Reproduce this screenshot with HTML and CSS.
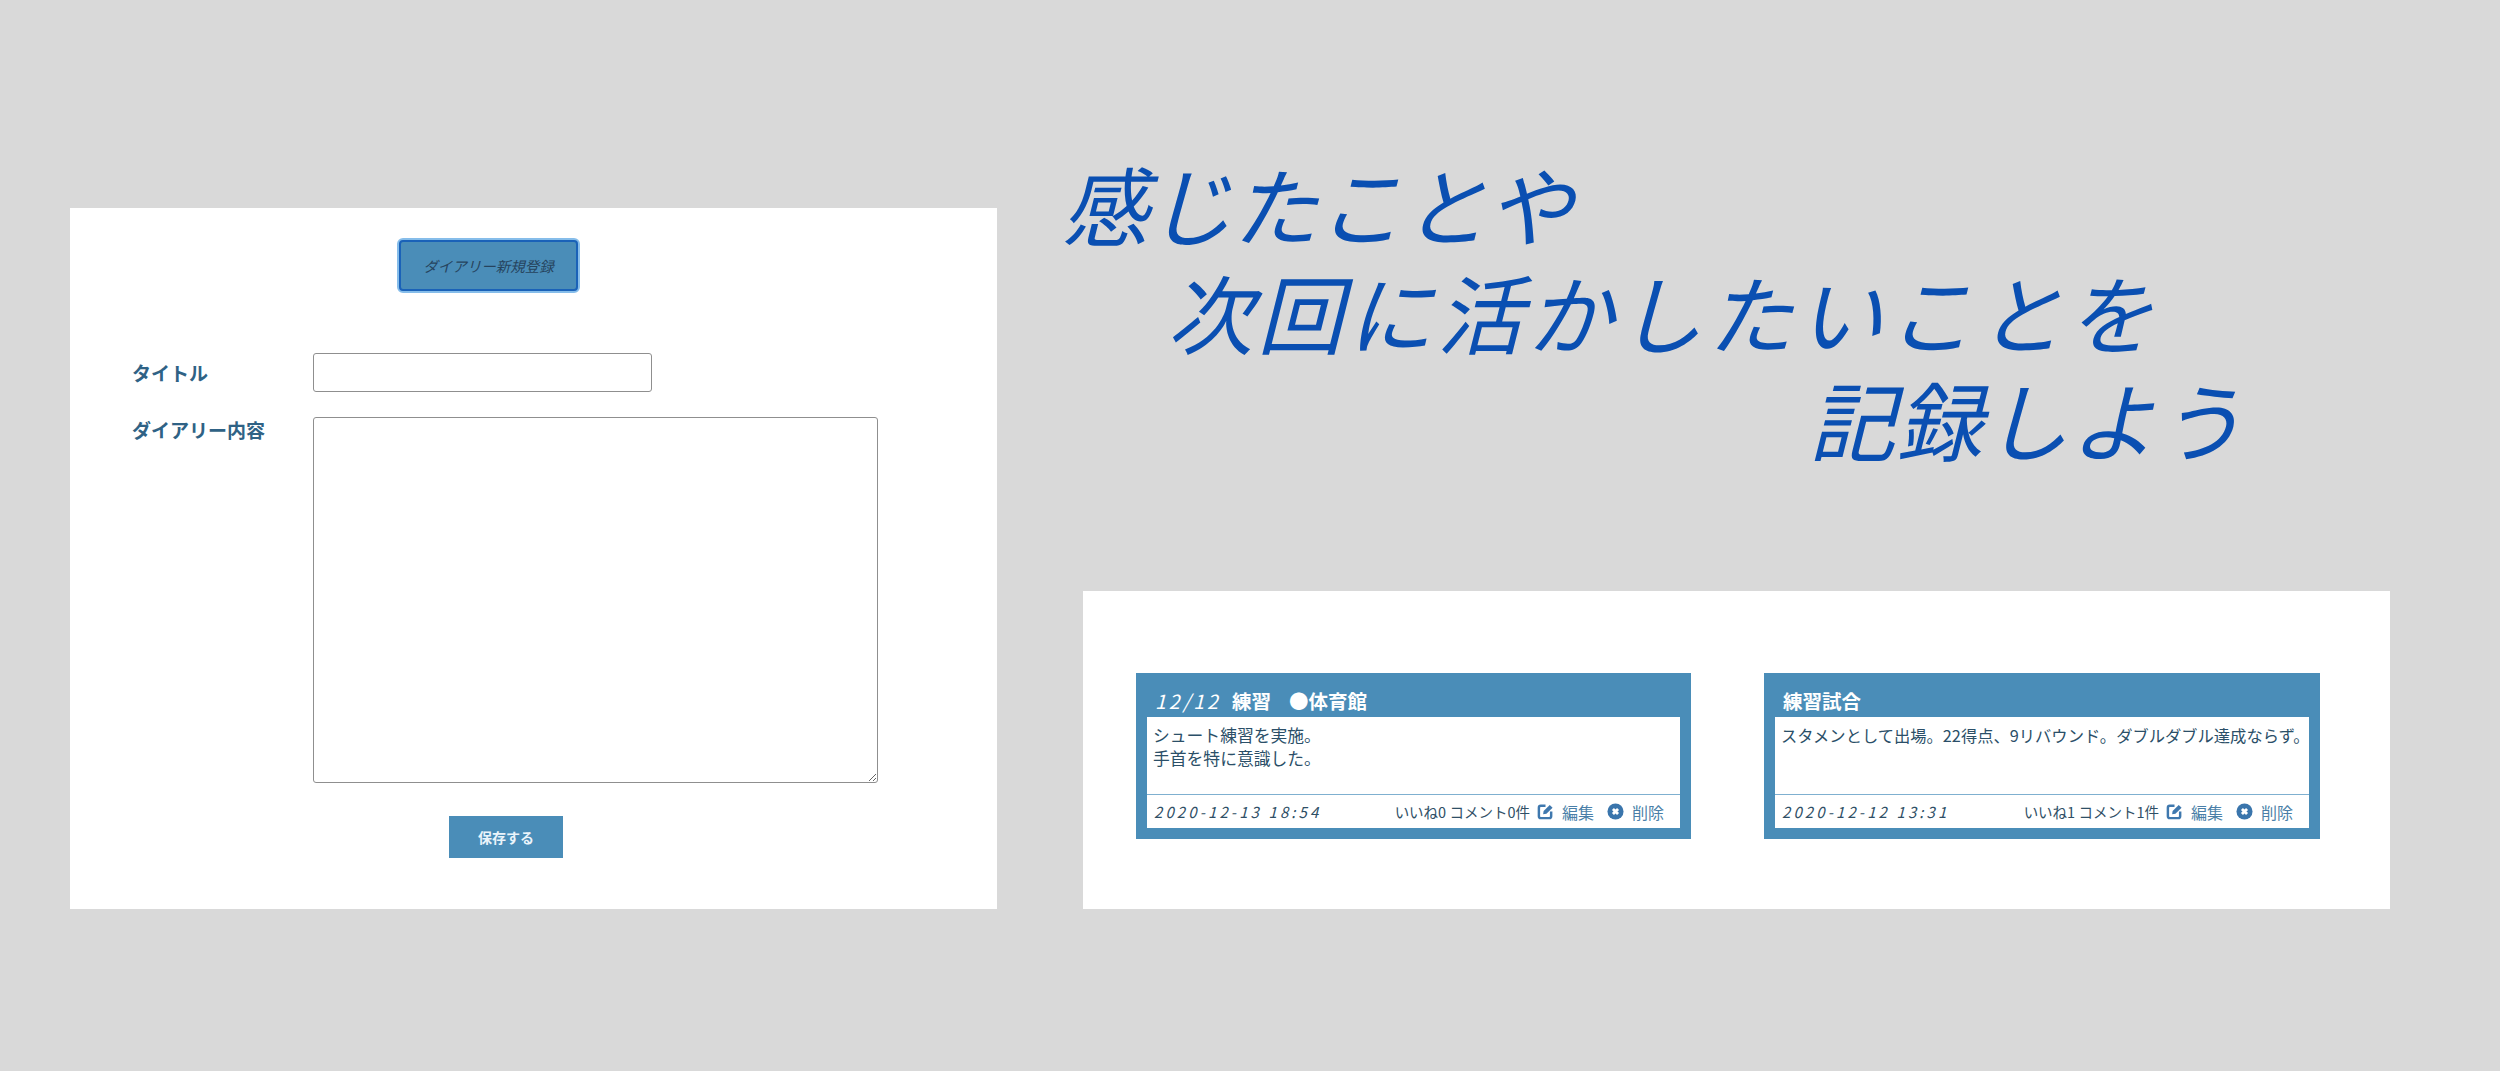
FILE: index.html
```html
<!DOCTYPE html>
<html lang="ja">
<head>
    <meta charset="UTF-8">
    <title>ダイアリー</title>
    <link rel="stylesheet" href="styles.css">
</head>
<body>

    <section class="form-panel">
        <button type="button" class="new-btn"><span class="btn-text">ダイアリー新規登録</span></button>
        <form class="diary-form">
            <label for="title" class="title-label">タイトル</label>
            <input type="text" id="title" class="title-input">
            <label for="content" class="content-label">ダイアリー内容</label>
            <textarea id="content" class="content-input"></textarea>
            <button type="button" class="save-btn">保存する</button>
        </form>
    </section>

    <div class="right-col">
        <h1 class="headline">
            <span class="line line-1">感じたことや</span>
            <span class="line line-2">次回に活かしたいことを</span>
            <span class="line line-3">記録しよう</span>
        </h1>

        <section class="list-panel">
            <article class="card">
                <h2 class="card-title"><span class="num">12/12</span><span class="kind">練習</span><span class="place">●体育館</span></h2>
                <div class="card-inner">
                    <p class="card-body">シュート練習を実施。<br>手首を特に意識した。</p>
                    <div class="card-foot">
                        <span class="date">2020-12-13 18:54</span>
                        <span class="counts">いいね0 コメント0件</span>
                        <a class="action">
                            <svg class="icon" viewBox="0 0 18 18"><path d="M9 3H4A2 2 0 0 0 2 5V14A2 2 0 0 0 4 16H13A2 2 0 0 0 15 14V9" fill="none" stroke="#3f78ae" stroke-width="2.600"/><path d="M7 8.500L13.500 2L16.500 5L10 11.500L6.500 12Z" fill="#3f78ae"/></svg>
                            編集
                        </a>
                        <a class="action">
                            <svg class="icon" viewBox="0 0 18 18"><circle cx="9" cy="9" r="8.500" fill="#3a75ac"/><path d="M6.300 6.300L11.700 11.700M11.700 6.300L6.300 11.700" stroke="#fff" stroke-width="3"/></svg>
                            削除
                        </a>
                    </div>
                </div>
            </article>

            <article class="card">
                <h2 class="card-title">練習試合</h2>
                <div class="card-inner">
                    <p class="card-body card-body-long">スタメンとして出場。22得点、9リバウンド。ダブルダブル達成ならず。</p>
                    <div class="card-foot">
                        <span class="date">2020-12-12 13:31</span>
                        <span class="counts">いいね1 コメント1件</span>
                        <a class="action">
                            <svg class="icon" viewBox="0 0 18 18"><path d="M9 3H4A2 2 0 0 0 2 5V14A2 2 0 0 0 4 16H13A2 2 0 0 0 15 14V9" fill="none" stroke="#3f78ae" stroke-width="2.600"/><path d="M7 8.500L13.500 2L16.500 5L10 11.500L6.500 12Z" fill="#3f78ae"/></svg>
                            編集
                        </a>
                        <a class="action">
                            <svg class="icon" viewBox="0 0 18 18"><circle cx="9" cy="9" r="8.500" fill="#3a75ac"/><path d="M6.300 6.300L11.700 11.700M11.700 6.300L6.300 11.700" stroke="#fff" stroke-width="3"/></svg>
                            削除
                        </a>
                    </div>
                </div>
            </article>
        </section>
    </div>

</body>
</html>
```

FILE: styles.css
```css
* {
    box-sizing: border-box;
}
body {
    margin: 0;
    width: 2500px;
    height: 1071px;
    padding: 0 110px 162px 70px;
    background-color: #d9d9d9;
    display: flex;
    align-items: flex-end;
    gap: 86px;
    font-family: "Noto Sans CJK JP", "Noto Sans", sans-serif;
    overflow: hidden;
}

/* left panel */
.form-panel {
    width: 927px;
    height: 701px;
    background-color: #fff;
    padding-top: 31px;
}
.new-btn {
    display: block;
    width: 181px;
    height: 53px;
    margin-left: 328px;
    padding: 0;
    background-color: #4a8db8;
    color: #26445e;
    border: 3px solid #1a62b8;
    border-radius: 5px;
    outline: 2px solid #86bdea;
    outline-offset: -1px;
    font-family: inherit;
    font-size: 14.500px;
    font-style: italic;
}
.diary-form {
    display: grid;
    grid-template-columns: 181px 1fr;
    padding: 61px 0 0 62px;
    justify-items: start;
}
.title-label, .content-label {
    color: #2f6285;
    font-weight: bold;
    font-size: 19px;
    line-height: 26px;
}
.title-label {
    margin-top: 7px;
}
.title-input {
    width: 339px;
    height: 39px;
    border: 1px solid #8f8f8f;
    border-radius: 3px;
    background: #fff;
}
.content-label {
    margin-top: 25px;
}
.content-input {
    width: 565px;
    height: 366px;
    margin-top: 25px;
    border: 1px solid #8f8f8f;
    border-radius: 3px;
    background: #fff;
}
.save-btn {
    grid-column: 1 / 3;
    width: 114px;
    height: 42px;
    margin: 33px 0 0 317px;
    padding: 0;
    background-color: #4a8db8;
    color: #eaf4fb;
    border: none;
    font-family: inherit;
    font-weight: bold;
    font-size: 14px;
}

/* right side */
.right-col {
    width: 1307px;
}
.headline {
    margin: 0 0 118px;
    height: 324px;
    color: #0a4fb2;
    font-size: 86px;
    font-weight: 400;
    line-height: 108px;
    white-space: nowrap;
}
.line {
    display: block;
    font-style: italic;
}
.line-1 {
    margin-left: -21px;
    letter-spacing: -1px;
}
.line-2 {
    margin-left: 84px;
    letter-spacing: 4px;
}
.line-3 {
    margin-left: 726px;
    letter-spacing: 1px;
    margin-top: -1px;
}
.list-panel {
    height: 318px;
    background-color: #fff;
    padding: 82px 70px 0 53px;
    display: flex;
    gap: 73px;
}
.card {
    width: 556px;
    height: 166px;
    background-color: #4a8db8;
    padding: 0 11px 11px;
}
.card-title {
    margin: 0;
    height: 44px;
    padding: 15px 0 0 8px;
    color: #fff;
    font-size: 19.500px;
    line-height: 26px;
    font-weight: bold;
}
.num {
    font-weight: 400;
    font-style: italic;
    letter-spacing: 3px;
}
.kind {
    margin-left: 11px;
}
.place {
    margin-left: 18px;
}
.card-inner {
    height: 111px;
    background-color: #fff;
}
.card-body {
    margin: 0;
    height: 78px;
    padding: 7px 6px 0;
    color: #2b4f68;
    font-size: 16.800px;
    line-height: 23px;
    border-bottom: 1px solid #7fb0d0;
    white-space: nowrap;
}
.card-body-long {
    font-size: 16.300px;
}
.card-foot {
    height: 33px;
    display: flex;
    align-items: center;
    padding: 0 16px 0 7px;
    color: #2f4f66;
    font-size: 14.500px;
}
.date {
    font-size: 15px;
    font-style: italic;
    letter-spacing: 3.100px;
    margin-right: auto;
}
.counts {
    margin-right: 7px;
}
.action {
    display: flex;
    align-items: center;
    gap: 8px;
    color: #4a7fa8;
    font-size: 16px;
    margin-left: 13px;
}
.counts + .action {
    margin-left: 0;
}
.icon {
    width: 17px;
    height: 17px;
}
```
